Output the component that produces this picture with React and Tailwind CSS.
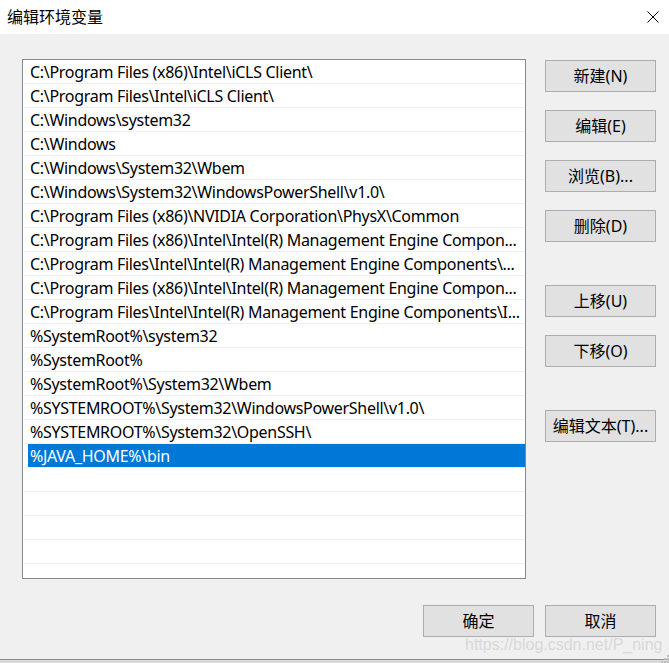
import React from "react";

const FONT = { fontFamily: '"Noto Sans", "Noto Sans CJK SC", sans-serif' };

const paths = [
  "C:\\Program Files (x86)\\Intel\\iCLS Client\\",
  "C:\\Program Files\\Intel\\iCLS Client\\",
  "C:\\Windows\\system32",
  "C:\\Windows",
  "C:\\Windows\\System32\\Wbem",
  "C:\\Windows\\System32\\WindowsPowerShell\\v1.0\\",
  "C:\\Program Files (x86)\\NVIDIA Corporation\\PhysX\\Common",
  "C:\\Program Files (x86)\\Intel\\Intel(R) Management Engine Compon...",
  "C:\\Program Files\\Intel\\Intel(R) Management Engine Components\\...",
  "C:\\Program Files (x86)\\Intel\\Intel(R) Management Engine Compon...",
  "C:\\Program Files\\Intel\\Intel(R) Management Engine Components\\I...",
  "%SystemRoot%\\system32",
  "%SystemRoot%",
  "%SystemRoot%\\System32\\Wbem",
  "%SYSTEMROOT%\\System32\\WindowsPowerShell\\v1.0\\",
  "%SYSTEMROOT%\\System32\\OpenSSH\\",
  "%JAVA_HOME%\\bin",
];
const SELECTED = 16;

function Btn({ children, className = "" }) {
  return (
    <div className={`w-[111px] h-[32px] shrink-0 border border-[#adadad] bg-[#e1e1e1] flex items-center justify-center text-[16px] text-black ${className}`}>
      {children}
    </div>
  );
}

export default function App() {
  return (
    <div className="relative w-[669px] h-[663px] bg-[#f0f0f0] flex flex-col overflow-hidden text-black" style={FONT}>
      {/* title bar */}
      <div className="h-[34px] shrink-0 bg-white flex items-center justify-between pl-[7px] pr-[10px]">
        <span className="text-[16px] leading-none">编辑环境变量</span>
        <svg width="12" height="12" viewBox="0 0 12 12">
          <path d="M0.5 0.5 L11.5 11.5 M11.5 0.5 L0.5 11.5" stroke="#000" strokeWidth="1" fill="none" />
        </svg>
      </div>

      {/* body */}
      <div className="flex pl-[22px] pt-[25px]">
        <div className="w-[504px] h-[520px] shrink-0 border border-[#828790] bg-white overflow-hidden">
          {Array.from({ length: 22 }).map((_, i) => {
            const text = paths[i];
            const sel = i === SELECTED;
            return (
              <div key={i} className="h-[24px] ml-[1px] border-b border-[#f0f0f0] flex">
                <div className={`flex-1 ml-[4px] pl-[2px] pt-[1px] flex items-center whitespace-nowrap overflow-hidden text-[16px] tracking-[-0.3px] ${sel ? "bg-[#0078d7] text-white" : ""}`}>
                  {text}
                </div>
              </div>
            );
          })}
        </div>

        <div className="flex flex-col ml-[19px] pt-[1px]">
          <Btn>新建(N)</Btn>
          <Btn className="mt-[18px]">编辑(E)</Btn>
          <Btn className="mt-[18px]">浏览(B)...</Btn>
          <Btn className="mt-[18px]">删除(D)</Btn>
          <Btn className="mt-[43px]">上移(U)</Btn>
          <Btn className="mt-[18px]">下移(O)</Btn>
          <Btn className="mt-[43px]">编辑文本(T)...</Btn>
        </div>
      </div>

      {/* footer buttons */}
      <div className="flex justify-end gap-[11px] pr-[13px] mt-[26px]">
        <Btn>确定</Btn>
        <Btn>取消</Btn>
      </div>

      <div className="flex-1" />
      <div className="h-[4px] shrink-0 border-t border-[#8c8c8c] bg-[#d9d9d9]" />

      {/* watermark */}
      <div
        className="absolute left-[465px] top-[635px] text-[16px] leading-[20px] text-[#d8d8d8] whitespace-nowrap"
        style={{ fontFamily: '"Liberation Sans", Arial, sans-serif' }}
      >
        https://blog.csdn.net/P_ning
      </div>

      {/* resize grip */}
      <svg className="absolute right-0 bottom-0" width="10" height="10" viewBox="0 0 10 10">
        <rect x="8" y="2" width="2" height="2" fill="#bdbdbd" />
        <rect x="5" y="5" width="2" height="2" fill="#bdbdbd" />
        <rect x="8" y="5" width="2" height="2" fill="#bdbdbd" />
        <rect x="2" y="8" width="2" height="2" fill="#bdbdbd" />
        <rect x="5" y="8" width="2" height="2" fill="#bdbdbd" />
        <rect x="8" y="8" width="2" height="2" fill="#bdbdbd" />
      </svg>
    </div>
  );
}
